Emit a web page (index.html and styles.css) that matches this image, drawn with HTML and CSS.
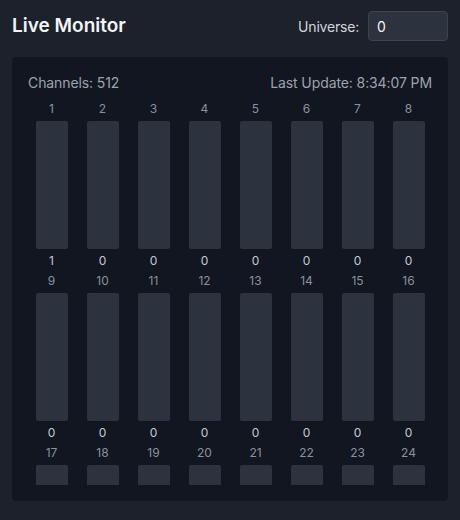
FILE: index.html
```html
<!DOCTYPE html>
<html lang="en">
<head>
<meta charset="utf-8">
<title>Live Monitor</title>
<link rel="stylesheet" href="styles.css">
</head>
<body>
<div class="page">
  <header class="top">
    <h1 class="title">Live Monitor</h1>
    <label class="universe">
      <span class="universe-label">Universe:</span>
      <input class="universe-input" type="text" value="0">
    </label>
  </header>
  <section class="panel">
    <div class="panel-head">
      <span>Channels: 512</span>
      <span>Last Update: 8:34:07 PM</span>
    </div>
    <div class="grid-wrap">
      <div class="grid" id="grid"></div>
    </div>
  </section>
</div>
<script src="app.js"></script>
</body>
</html>
```
FILE: app.js
```js
(function () {
  var grid = document.getElementById('grid');
  var html = '';
  for (var i = 1; i <= 24; i++) {
    var v = i === 1 ? 1 : 0;
    html += '<div class="ch"><div class="ch-num">' + i + '</div>' +
      '<div class="bar"><div class="bar-fill" style="height:' + (v / 255 * 100) + '%"></div></div>' +
      '<div class="ch-val">' + v + '</div></div>';
  }
  grid.innerHTML = html;
})();
```
FILE: styles.css
```css
* { box-sizing: border-box; }
html, body {
  margin: 0;
  height: 100%;
  background: #1c212b;
  font-family: Inter, "Noto Sans", sans-serif;
  color: #e5e7eb;
}
.page {
  height: 520px;
  padding: 11px 12px 19px;
  display: flex;
  flex-direction: column;
}
.top {
  display: flex;
  align-items: center;
  justify-content: space-between;
  height: 30px;
  margin-bottom: 16px;
}
.title {
  margin: 0;
  font-size: 19px;
  font-weight: 600;
  color: #f3f4f6;
  line-height: 28px;
}
.universe {
  display: flex;
  align-items: center;
  gap: 9px;
}
.universe-label {
  font-size: 14px;
  color: #d1d5db;
  letter-spacing: -0.2px;
}
.universe-input {
  width: 80px;
  height: 30px;
  padding: 0 8px;
  background: #2c323e;
  border: 1px solid #3b4250;
  border-radius: 4px;
  color: #f3f4f6;
  font-family: Inter, "Noto Sans", sans-serif;
  font-size: 14px;
  outline: none;
}
.panel {
  flex: 1;
  min-height: 0;
  background: #121620;
  border-radius: 4px;
  padding: 16px;
  display: flex;
  flex-direction: column;
}
.panel-head {
  display: flex;
  justify-content: space-between;
  font-size: 14px;
  line-height: 20px;
  color: #9ca3af;
  margin-bottom: 8px;
  letter-spacing: -0.1px;
}
.grid-wrap {
  flex: 1;
  min-height: 0;
  overflow: hidden;
}
.grid {
  display: grid;
  grid-template-columns: repeat(8, 1fr);
  column-gap: 4px;
  row-gap: 4px;
}
.ch {
  display: flex;
  flex-direction: column;
  align-items: center;
}
.ch-num {
  font-size: 12px;
  line-height: 16px;
  color: #8b919c;
  margin-bottom: 4px;
}
.bar {
  width: 32px;
  height: 128px;
  background: #2c323e;
  border-radius: 2px;
  display: flex;
  align-items: flex-end;
  overflow: hidden;
}
.bar-fill {
  width: 100%;
  background: #3b82f6;
}
.ch-val {
  font-size: 12px;
  line-height: 16px;
  color: #c5c9d0;
  margin-top: 4px;
}
```
